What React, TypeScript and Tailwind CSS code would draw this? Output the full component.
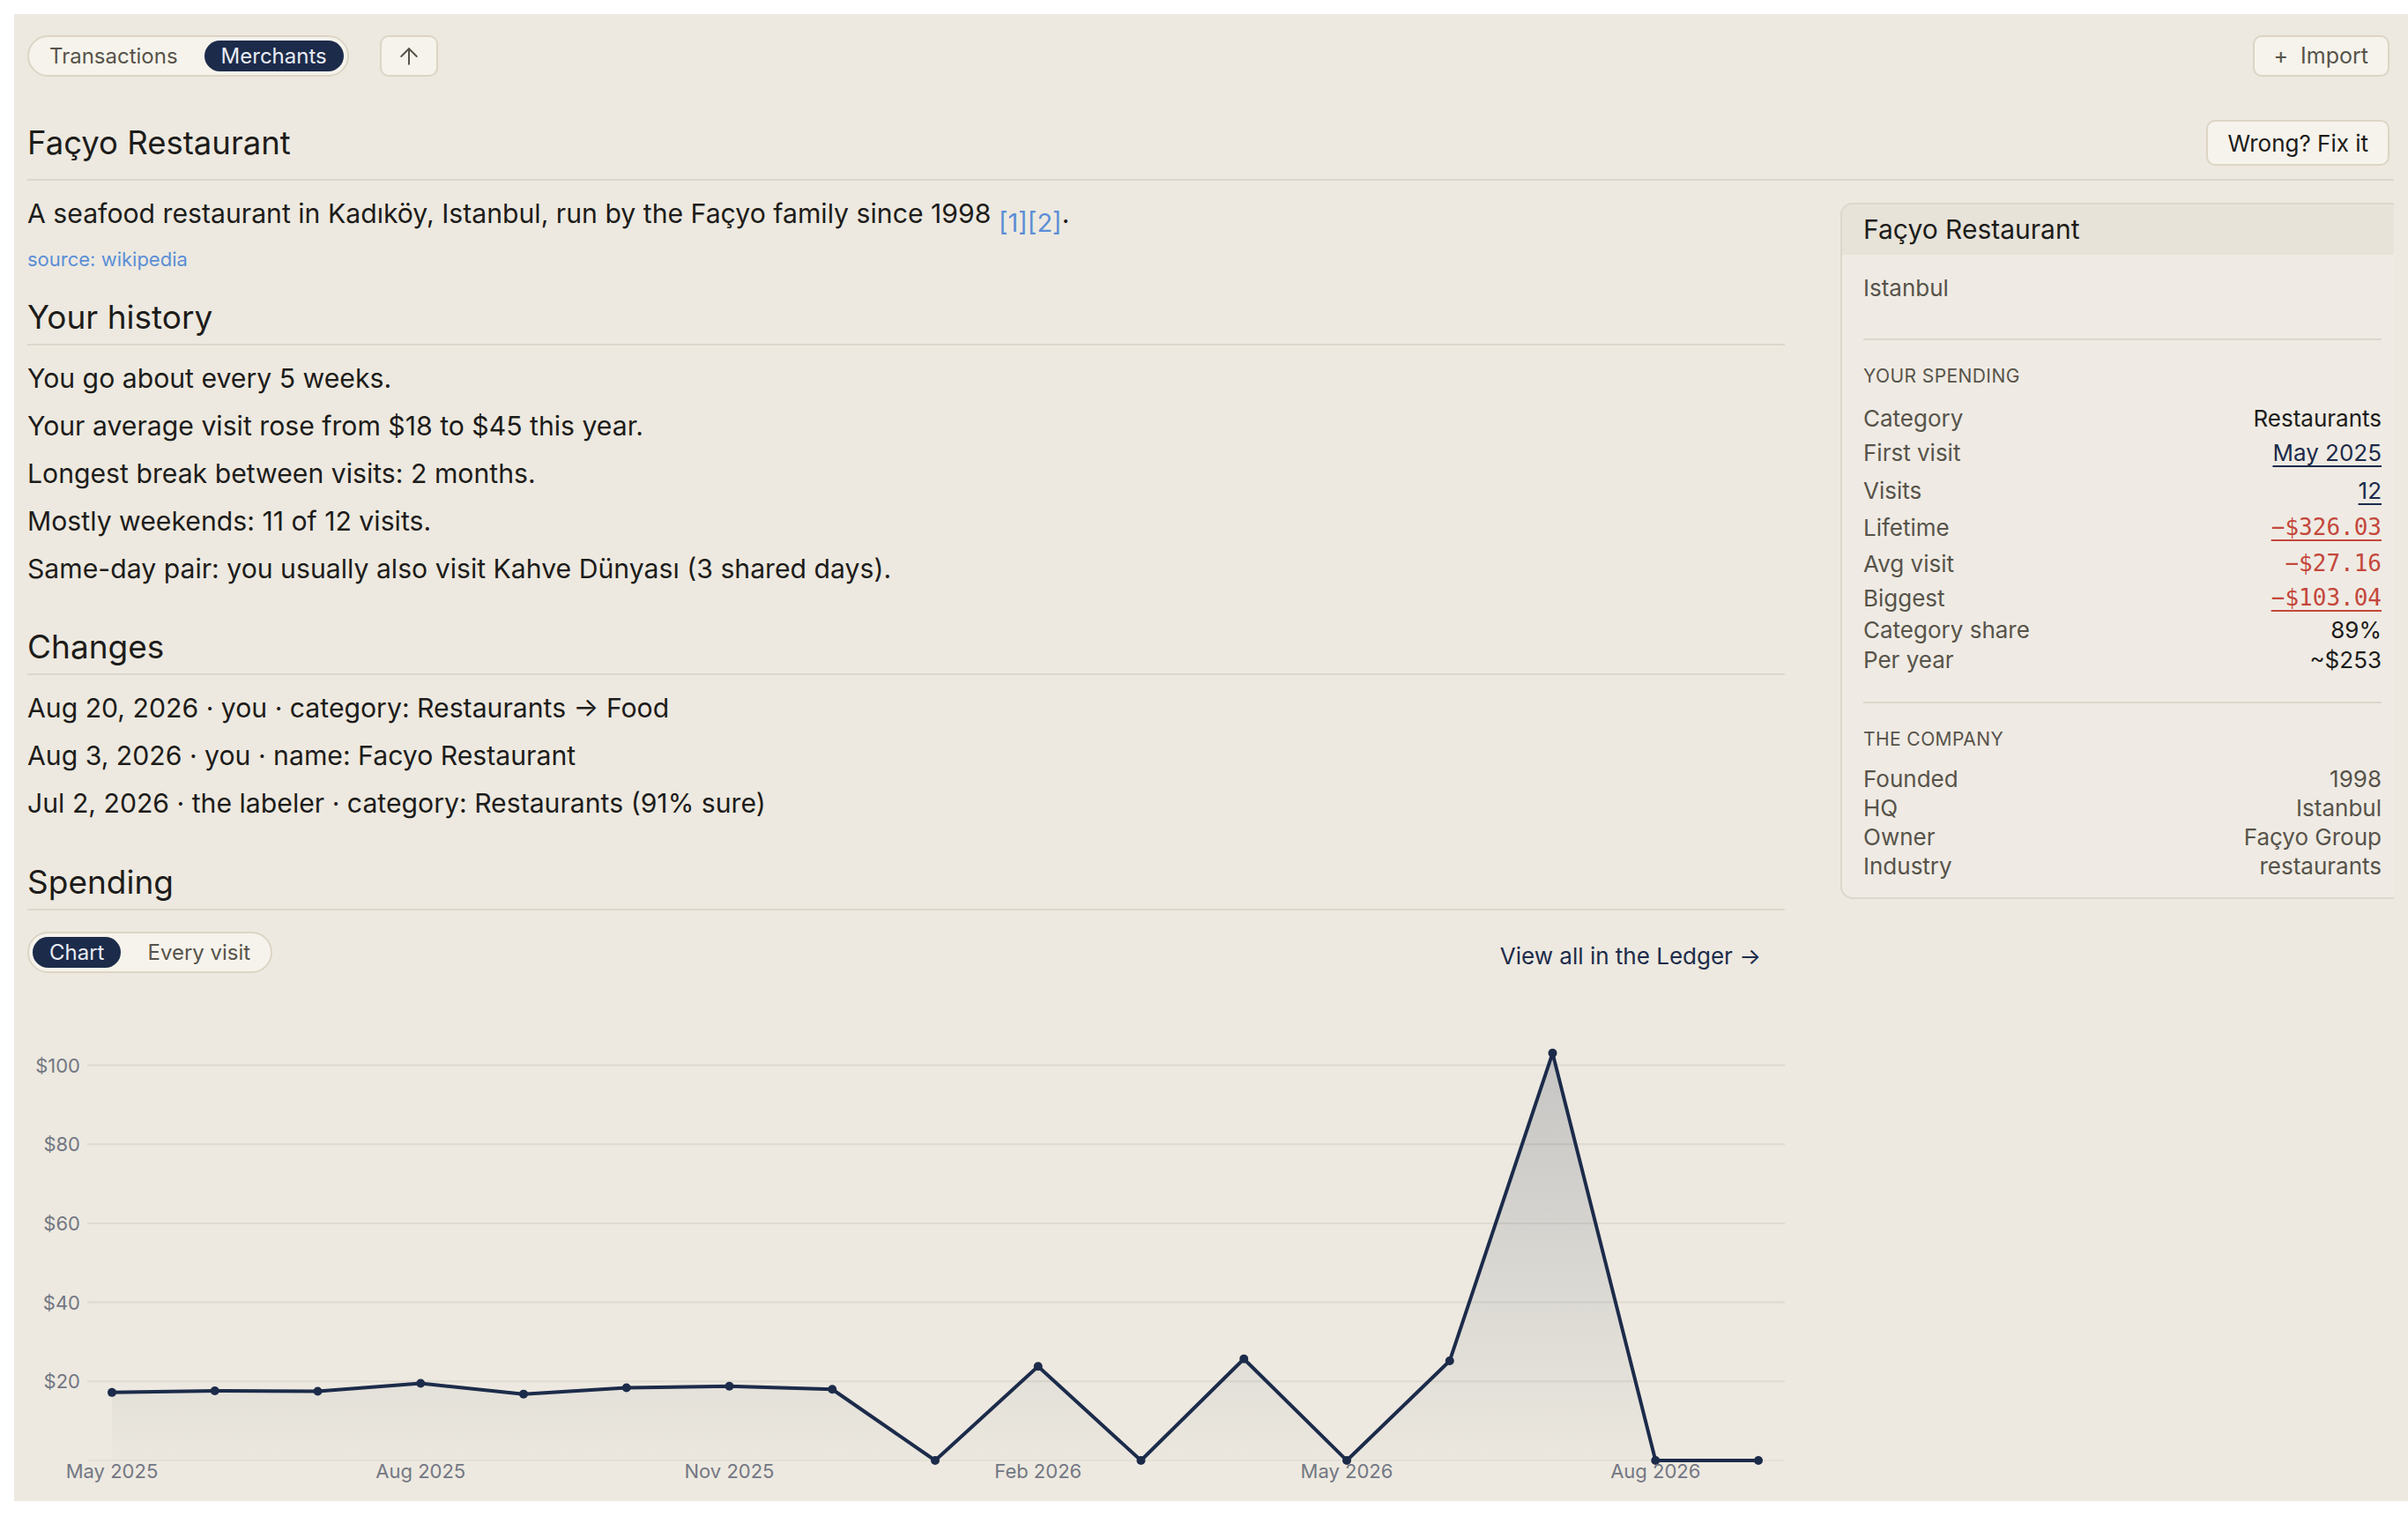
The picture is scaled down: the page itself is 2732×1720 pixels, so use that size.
import type { ReactNode } from 'react'
import { ArrowUp } from 'lucide-react'

type Row = { label: string; value: ReactNode; h: string }

const moneyLink = "font-['DejaVu_Sans_Mono',monospace] text-[#c4473b] underline decoration-[2px] underline-offset-[5px]"

const SPENDING: Row[] = [
  { label: 'Category', value: <span className="text-[#1d1c1a]">Restaurants</span>, h: 'h-[38px]' },
  { label: 'First visit', value: <span className="text-[#1c2b4a] underline decoration-[2px] underline-offset-[5px]">May 2025</span>, h: 'h-[41px]' },
  { label: 'Visits', value: <span className="text-[#1c2b4a] underline decoration-[2px] underline-offset-[5px]">12</span>, h: 'h-[44px]' },
  { label: 'Lifetime', value: <span className={moneyLink}>−$326.03</span>, h: 'h-[41px]' },
  { label: 'Avg visit', value: <span className="font-['DejaVu_Sans_Mono',monospace] text-[#c4473b]">−$27.16</span>, h: 'h-[40px]' },
  { label: 'Biggest', value: <span className={moneyLink}>−$103.04</span>, h: 'h-[38px]' },
  { label: 'Category share', value: <span className="text-[#1d1c1a]">89%</span>, h: 'h-[35px]' },
  { label: 'Per year', value: <span className="text-[#1d1c1a]">~$253</span>, h: 'h-[33px]' },
]

const COMPANY: [string, string][] = [
  ['Founded', '1998'],
  ['HQ', 'Istanbul'],
  ['Owner', 'Façyo Group'],
  ['Industry', 'restaurants'],
]

const HISTORY = [
  'You go about every 5 weeks.',
  'Your average visit rose from $18 to $45 this year.',
  'Longest break between visits: 2 months.',
  'Mostly weekends: 11 of 12 visits.',
  'Same-day pair: you usually also visit Kahve Dünyası (3 shared days).',
]

const CHANGES = [
  'Aug 20, 2026 · you · category: Restaurants → Food',
  'Aug 3, 2026 · you · name: Facyo Restaurant',
  'Jul 2, 2026 · the labeler · category: Restaurants (91% sure)',
]

// monthly totals, May 2025 .. Sep 2026
const TOTALS = [17.2, 17.6, 17.5, 19.5, 16.8, 18.4, 18.8, 18.0, 0, 23.8, 0, 25.7, 0, 25.2, 103.04, 0, 0]
const TICKS: [number, string][] = [
  [0, 'May 2025'],
  [3, 'Aug 2025'],
  [6, 'Nov 2025'],
  [9, 'Feb 2026'],
  [12, 'May 2026'],
  [15, 'Aug 2026'],
]

function Toggle({ items, active }: { items: string[]; active: string }) {
  return (
    <div className="inline-flex items-center gap-[11px] rounded-full border-2 border-[#dcd5c5] bg-[#f6f3ec] p-[4px]">
      {items.map((it) => (
        <button
          key={it}
          type="button"
          className={`h-[35px] rounded-full px-[19px] text-[24px] leading-none ${
            it === active ? 'bg-[#1c2b4a] text-[#e8ecf4]' : 'text-[#57534a]'
          }`}
        >
          {it}
        </button>
      ))}
    </div>
  )
}

function SectionTitle({ children, className = '' }: { children: ReactNode; className?: string }) {
  return (
    <h2 className={`border-b-2 border-[#dcd7cc] pb-[6px] text-[37px] leading-[48px] text-[#1d1c1a] ${className}`}>
      {children}
    </h2>
  )
}

function SpendChart() {
  const W = 1994
  const H = 563
  const left = 68
  const base = 515
  const perDollar = 4.485
  const x0 = 96
  const step = 116.75
  const pts = TOTALS.map((v, i) => [x0 + i * step, base - v * perDollar])
  const line = pts.map(([x, y], i) => `${i ? 'L' : 'M'}${x} ${y}`).join(' ')
  const area = `${line} L${pts[pts.length - 1][0]} ${base} L${x0} ${base} Z`

  return (
    <svg width={W} height={H} className="mt-[38px] block">
      <defs>
        <linearGradient id="spendFill" gradientUnits="userSpaceOnUse" x1="0" y1="53" x2="0" y2={base}>
          <stop offset="0" stopColor="#1c2b4a" stopOpacity="0.19" />
          <stop offset="1" stopColor="#1c2b4a" stopOpacity="0.01" />
        </linearGradient>
      </defs>
      {[100, 80, 60, 40, 20].map((v) => {
        const y = base - v * perDollar
        return (
          <g key={v}>
            <line x1={left} x2={W} y1={y} y2={y} stroke="#dedad1" strokeWidth="2" />
            <text x="60" y={y} textAnchor="end" dominantBaseline="central" fontSize="22" fill="#737783">
              ${v}
            </text>
          </g>
        )
      })}
      <line x1={left} x2={W} y1={base} y2={base} stroke="#e2ded5" strokeWidth="1.5" />
      <path d={area} fill="url(#spendFill)" />
      <path d={line} fill="none" stroke="#1c2b4a" strokeWidth="4" strokeLinejoin="round" />
      {pts.map(([x, y], i) => (
        <circle key={i} cx={x} cy={y} r="5" fill="#1c2b4a" />
      ))}
      {TICKS.map(([i, label]) => (
        <text key={label} x={x0 + i * step} y="527" textAnchor="middle" dominantBaseline="central" fontSize="22" fill="#737783">
          {label}
        </text>
      ))}
    </svg>
  )
}

export default function App() {
  return (
    <div className="min-h-screen bg-white pl-[16px] pt-[16px] font-['Inter',sans-serif]">
      <div className="h-[1687px] overflow-hidden bg-[#ede9e0] pl-[15px] pr-[16px] pt-[24px]">
        {/* Top bar */}
        <div className="flex items-center pr-[5px]">
          <Toggle items={['Transactions', 'Merchants']} active="Merchants" />
          <button
            type="button"
            className="ml-[35px] flex h-[47px] w-[66px] items-center justify-center rounded-[10px] border-2 border-[#dcd5c5] bg-[#f6f3ec] text-[#57534a]"
          >
            <ArrowUp size={30} strokeWidth={1.6} />
          </button>
          <button
            type="button"
            className="ml-auto flex h-[47px] items-center gap-[14px] rounded-[10px] border-2 border-[#dcd5c5] bg-[#f6f3ec] px-[22px] text-[25px] text-[#57534a]"
          >
            <span>+</span>
            <span>Import</span>
          </button>
        </div>

        {/* Merchant heading */}
        <div className="mt-[49px] flex items-center justify-between border-b-2 border-[#dcd7cc] pb-[15px] pr-[5px]">
          <h1 className="text-[36.5px] leading-[48px] text-[#1d1c1a]">Façyo Restaurant</h1>
          <button
            type="button"
            className="h-[52px] rounded-[10px] border-2 border-[#dcd5c5] bg-[#f6f3ec] px-[22px] text-[26px] text-[#1d1c1a]"
          >
            Wrong? Fix it
          </button>
        </div>

        <div className="flex items-start">
          <main className="w-[1994px] shrink-0 pt-[15px]">
            <p className="text-[30.2px] leading-[44px] text-[#1d1c1a]">
              A seafood restaurant in Kadıköy, Istanbul, run by the Façyo family since 1998{' '}
              <span className="relative top-[10px] text-[29px] text-[#5b8ed6]">[1][2]</span>.
            </p>
            <p className="mt-[14px] text-[22px] leading-[30px] text-[#5b8ed6]">source: wikipedia</p>

            <SectionTitle className="mt-[27px]">Your history</SectionTitle>
            <ul className="mt-[10px]">
              {HISTORY.map((h) => (
                <li key={h} className="text-[30.2px] leading-[54px] text-[#1d1c1a]">
                  {h}
                </li>
              ))}
            </ul>

            <SectionTitle className="mt-[38px]">Changes</SectionTitle>
            <ul className="mt-[10px]">
              {CHANGES.map((c) => (
                <li key={c} className="text-[30.2px] leading-[54px] text-[#1d1c1a]">
                  {c}
                </li>
              ))}
            </ul>

            <SectionTitle className="mt-[39px]">Spending</SectionTitle>
            <div className="mt-[24px] flex items-center justify-between">
              <Toggle items={['Chart', 'Every visit']} active="Chart" />
              <a className="mt-[8px] pr-[27px] text-[26px] text-[#1c2b4a]">View all in the Ledger →</a>
            </div>
            <SpendChart />
          </main>

          {/* Merchant card */}
          <aside className="ml-[63px] mt-[25px] w-[628px] shrink-0 rounded-l-[14px] border-2 border-r-0 border-[#dcd7cc] bg-[#efebe4]">
            <div className="flex h-[57px] items-center rounded-tl-[12px] bg-[#e7e3d9] pl-[24px] text-[30px] text-[#1d1c1a]">
              Façyo Restaurant
            </div>
            <div className="pb-[19px] pl-[24px] pr-[14px]">
              <div className="border-b-2 border-[#dcd7cc] pb-[40px] pt-[21px] text-[26px] leading-[34px] text-[#57534a]">
                Istanbul
              </div>

              <div className="border-b-2 border-[#dcd7cc] pb-[31px]">
                <p className="mt-[26px] text-[21px] uppercase leading-[30px] tracking-[0.02em] text-[#57534a]">Your spending</p>
                <div className="mt-[13px]">
                  {SPENDING.map((r) => (
                    <div key={r.label} className={`flex items-center justify-between text-[26px] ${r.h}`}>
                      <span className="text-[#57534a]">{r.label}</span>
                      {r.value}
                    </div>
                  ))}
                </div>
              </div>

              <p className="mt-[26px] text-[21px] uppercase leading-[30px] tracking-[0.02em] text-[#57534a]">The company</p>
              <div className="mt-[13px]">
                {COMPANY.map(([k, v]) => (
                  <div key={k} className="flex h-[33px] items-center justify-between text-[26px] text-[#57534a]">
                    <span>{k}</span>
                    <span>{v}</span>
                  </div>
                ))}
              </div>
            </div>
          </aside>
        </div>
      </div>
    </div>
  )
}
